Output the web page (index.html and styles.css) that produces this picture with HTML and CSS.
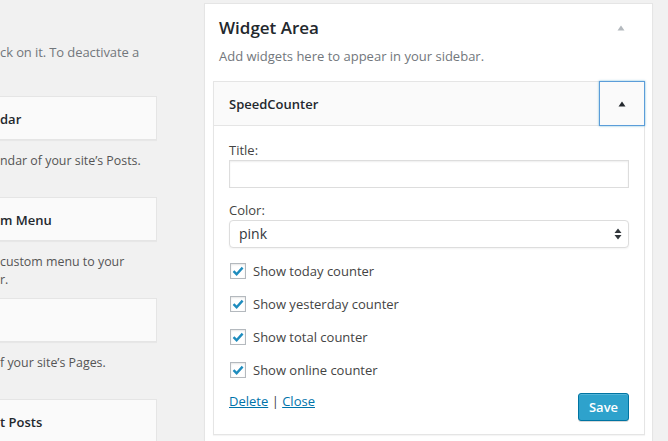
FILE: index.html
```html
<!DOCTYPE html>
<html lang="en">
<head>
<meta charset="utf-8">
<title>Widgets</title>
<link rel="stylesheet" href="styles.css">
</head>
<body>
<div class="page">
  <div class="available">
    <p class="intro">ck on it. To deactivate a</p>
    <div class="avail-widget">
      <div class="card"><span class="card-title">dar</span></div>
      <p class="desc">ndar of your site’s Posts.</p>
    </div>
    <div class="avail-widget">
      <div class="card"><span class="card-title">m Menu</span></div>
      <p class="desc">custom menu to your<br>r.</p>
    </div>
    <div class="avail-widget">
      <div class="card"><span class="card-title"></span></div>
      <p class="desc">f your site’s Pages.</p>
    </div>
    <div class="avail-widget last">
      <div class="card"><span class="card-title">t Posts</span></div>
    </div>
  </div>

  <div class="sidebar">
    <div class="sidebar-head">
      <h2>Widget Area</h2>
      <svg class="collapse" width="8" height="6" viewBox="0 0 8 6"><path d="M4 0.5 L7.5 5.5 L0.5 5.5 Z" fill="#b4b9be"/></svg>
    </div>
    <p class="sidebar-desc">Add widgets here to appear in your sidebar.</p>

    <div class="widget">
      <div class="widget-top">
        <span class="widget-title">SpeedCounter</span>
        <button class="toggle" type="button" aria-label="Collapse">
          <svg width="8" height="6" viewBox="0 0 8 6"><path d="M4 0.5 L7.5 5.5 L0.5 5.5 Z" fill="#23282d"/></svg>
        </button>
      </div>
      <div class="widget-inside">
        <label class="field-label">Title:</label>
        <div class="text-input"></div>
        <label class="field-label color-label">Color:</label>
        <div class="select">
          <span>pink</span>
          <svg width="8" height="12" viewBox="0 0 8 12"><path d="M4 0.5 L7.5 5 L0.5 5 Z M4 11.5 L7.5 7 L0.5 7 Z" fill="#32373c"/></svg>
        </div>
        <div class="checks">
          <div class="check-row"><span class="cb"><svg width="14" height="14" viewBox="0 0 14 14"><path d="M2.5 7.2 L5.6 10.2 L11.6 3.6" stroke="#1e8cbe" stroke-width="2.4" fill="none"/></svg></span>Show today counter</div>
          <div class="check-row"><span class="cb"><svg width="14" height="14" viewBox="0 0 14 14"><path d="M2.5 7.2 L5.6 10.2 L11.6 3.6" stroke="#1e8cbe" stroke-width="2.4" fill="none"/></svg></span>Show yesterday counter</div>
          <div class="check-row"><span class="cb"><svg width="14" height="14" viewBox="0 0 14 14"><path d="M2.5 7.2 L5.6 10.2 L11.6 3.6" stroke="#1e8cbe" stroke-width="2.4" fill="none"/></svg></span>Show total counter</div>
          <div class="check-row"><span class="cb"><svg width="14" height="14" viewBox="0 0 14 14"><path d="M2.5 7.2 L5.6 10.2 L11.6 3.6" stroke="#1e8cbe" stroke-width="2.4" fill="none"/></svg></span>Show online counter</div>
        </div>
        <div class="widget-footer">
          <div class="links"><a href="#">Delete</a> | <a href="#">Close</a></div>
          <button class="save" type="button">Save</button>
        </div>
      </div>
    </div>
  </div>
</div>
</body>
</html>
```

FILE: styles.css
```css
html, body {
  margin: 0;
  padding: 0;
}
body {
  background: #f1f1f1;
  font-family: "Open Sans", "Liberation Sans", sans-serif;
  font-size: 13px;
  line-height: 18px;
  color: #444;
  height: 441px;
  overflow: hidden;
}
.page {
  display: flex;
  align-items: flex-start;
  height: 441px;
  overflow: hidden;
}
.available {
  width: 157px;
  flex: none;
  overflow: hidden;
  margin-right: 47px;
  height: 441px;
}
.intro {
  margin: 43px 0 0;
  color: #72777c;
  white-space: nowrap;
  letter-spacing: -0.1px;
}
.avail-widget {
  height: 101px;
  box-sizing: border-box;
}
.avail-widget.last {
  height: 41px;
}
.avail-widget:first-of-type {
  margin-top: 35px;
}
.card {
  height: 44px;
  box-sizing: border-box;
  background: #fafafa;
  border: 1px solid #e5e5e5;
  border-left: none;
  box-shadow: 0 1px 1px rgba(0,0,0,0.04);
  display: flex;
  align-items: center;
}
.card-title {
  font-weight: 600;
  color: #23282d;
  white-space: nowrap;
  padding-top: 1px;
}
.desc {
  margin: 12px 0 0;
  color: #555;
  font-size: 12.4px;
  white-space: nowrap;
}
.sidebar {
  width: 449px;
  flex: none;
  box-sizing: border-box;
  margin-top: 3px;
  height: 438px;
  background: #fff;
  border: 1px solid #e5e5e5;
  border-bottom: none;
  box-shadow: 0 1px 1px rgba(0,0,0,0.04);
  padding: 0 7px 0 8px;
}
.sidebar-head {
  display: flex;
  align-items: center;
  justify-content: space-between;
  padding: 11px 20px 0 6px;
}
.sidebar-head h2 {
  margin: 0;
  font-size: 17px;
  line-height: 26px;
  font-weight: 600;
  color: #23282d;
}
.collapse {
  display: block;
}
.sidebar-desc {
  margin: 6px 0 0 6px;
  color: #72777c;
}
.widget {
  margin-top: 16px;
  background: #fff;
  box-shadow: 0 1px 1px rgba(0,0,0,0.04);
}
.widget-top {
  display: flex;
  align-items: stretch;
  justify-content: space-between;
  height: 45px;
  box-sizing: border-box;
  background: #fafafa;
  border: 1px solid #e5e5e5;
}
.widget-title {
  align-self: center;
  padding-left: 15px;
  font-weight: 600;
  color: #23282d;
}
.toggle {
  width: 46px;
  margin: -1px -1px -1px 0;
  padding: 0;
  background: #fafafa;
  border: 1px solid #5b9dd9;
  box-shadow: 0 0 2px rgba(30,140,190,0.6);
  display: flex;
  align-items: center;
  justify-content: center;
}
.toggle svg {
  display: block;
  margin-top: 1px;
}
.widget-inside {
  border: 1px solid #e5e5e5;
  border-top: none;
  padding: 15px 15px 13px;
}
.field-label {
  display: block;
  color: #444;
}
.text-input {
  margin-top: 1px;
  height: 28px;
  box-sizing: border-box;
  border: 1px solid #ddd;
  box-shadow: inset 0 1px 2px rgba(0,0,0,0.07);
  background: #fff;
}
.color-label {
  margin-top: 13px;
}
.select {
  margin-top: 1px;
  height: 28px;
  box-sizing: border-box;
  border: 1px solid #ddd;
  border-radius: 4px;
  box-shadow: 0 1px 2px rgba(0,0,0,0.05);
  background: #fff;
  display: flex;
  align-items: center;
  justify-content: space-between;
  padding: 0 6px 0 9px;
  font-size: 14px;
  color: #32373c;
}
.select svg {
  display: block;
}
.checks {
  margin-top: 15px;
  display: flex;
  flex-direction: column;
  gap: 17px;
}
.check-row {
  display: flex;
  align-items: center;
  height: 16px;
  color: #444;
}
.cb {
  width: 16px;
  height: 16px;
  box-sizing: border-box;
  border: 1px solid #b4b9be;
  background: #fff;
  box-shadow: inset 0 1px 2px rgba(0,0,0,0.1);
  margin: 0 7px 0 1px;
  display: flex;
  align-items: center;
  justify-content: center;
  flex: none;
}
.cb svg {
  display: block;
}
.widget-footer {
  margin-top: 14px;
  display: flex;
  justify-content: space-between;
  align-items: flex-start;
}
.links {
  color: #444;
}
.links a {
  color: #0073aa;
  text-decoration: underline;
}
.save {
  margin-top: 1px;
  height: 28px;
  width: 51px;
  padding: 0;
  box-sizing: border-box;
  background: #2ea2cc;
  border: 1px solid #0074a2;
  border-radius: 3px;
  box-shadow: inset 0 1px 0 rgba(120,200,230,0.5), 0 1px 0 rgba(0,0,0,0.15);
  color: #fff;
  font-family: "Open Sans", "Liberation Sans", sans-serif;
  font-size: 13px;
  font-weight: 600;
}
```
